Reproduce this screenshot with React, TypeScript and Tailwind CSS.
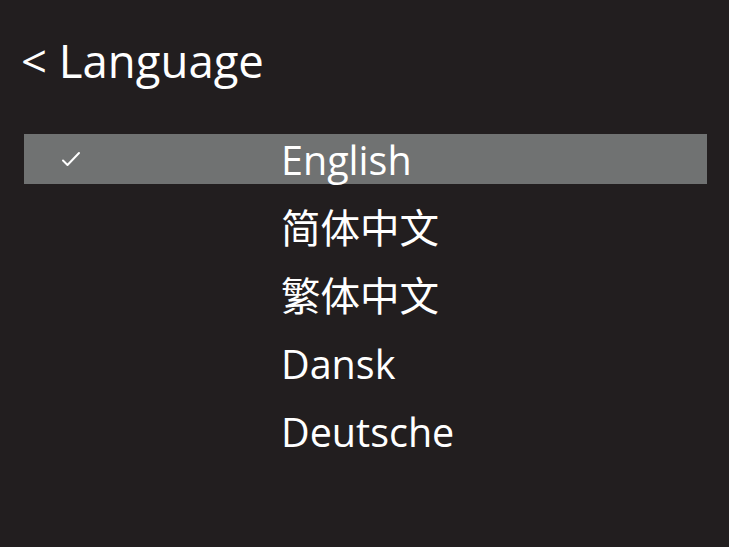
const languages = ["English", "简体中文", "繁体中文", "Dansk", "Deutsche"];

function Check() {
  return (
    <svg width="20" height="16" viewBox="0 0 20 16" fill="none">
      <path d="M2 9.5 L6.5 14 L18 2" stroke="white" strokeWidth="2" strokeLinecap="round" strokeLinejoin="round" />
    </svg>
  );
}

export default function App() {
  const selected = "English";
  return (
    <div
      className="w-[729px] h-[547px] bg-[#221e1f] text-white overflow-hidden"
      style={{ fontFamily: '"Open Sans", "Noto Sans CJK SC", sans-serif' }}
    >
      <div className="pl-[21px] pt-[33px] h-[134px]">
        <div className="text-[45.5px] leading-[54px]">&lt; Language</div>
      </div>
      <ul className="ml-[24px] mr-[22px] flex flex-col gap-[18px]">
        {languages.map((lang) => (
          <li
            key={lang}
            className={
              "h-[50px] flex items-center " + (lang === selected ? "bg-[#707272]" : "")
            }
          >
            <div className="w-[257px] pl-[37px] flex items-center">
              {lang === selected && <Check />}
            </div>
            <span className="text-[39.5px] leading-[52px] pt-[2px]">{lang}</span>
          </li>
        ))}
      </ul>
    </div>
  );
}
